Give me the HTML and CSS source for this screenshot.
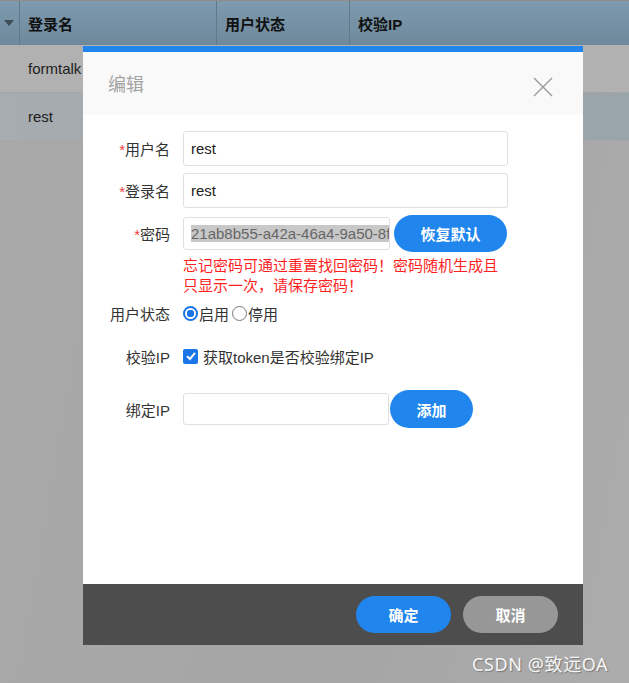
FILE: index.html
```html
<!DOCTYPE html>
<html lang="zh-CN">
<head>
    <meta charset="utf-8">
    <title>编辑</title>
    <link rel="stylesheet" href="styles.css">
</head>
<body>
    <div class="tabel">
        <div class="hoved">
            <div class="kol pil"><span class="trekant"></span></div>
            <div class="kol navn">登录名</div>
            <div class="kol status">用户状态</div>
            <div class="kol ip">校验IP</div>
        </div>
        <div class="raekke">formtalk</div>
        <div class="raekke valgt">rest</div>
    </div>

    <div class="dialog">
        <div class="top">
            <span class="titel">编辑</span>
            <svg class="luk" width="20" height="20" viewBox="0 0 20 20">
                <path d="M1 1 L19 19 M19 1 L1 19" stroke="#9a9a9a" stroke-width="1.4" fill="none"/>
            </svg>
        </div>
        <div class="indhold">
            <div class="felt">
                <label><i>*</i>用户名</label>
                <div class="input">rest</div>
            </div>
            <div class="felt">
                <label><i>*</i>登录名</label>
                <div class="input">rest</div>
            </div>
            <div class="felt kode">
                <label><i>*</i>密码</label>
                <div class="input kort"><span class="markeret">21ab8b55-a42a-46a4-9a50-8f1</span></div>
                <button class="knap">恢复默认</button>
            </div>
            <p class="fejl">忘记密码可通过重置找回密码！密码随机生成且只显示一次，请保存密码！</p>
            <div class="felt lav">
                <label>用户状态</label>
                <span class="radio on"></span>启用
                <span class="radio nr2"></span>停用
            </div>
            <div class="felt lav sidst">
                <label>校验IP</label>
                <span class="check">
                    <svg width="14" height="14" viewBox="0 0 14 14"><path d="M3 7.2 L6 10 L11 3.8" stroke="#fff" stroke-width="2" fill="none"/></svg>
                </span>
                获取token是否校验绑定IP
            </div>
            <div class="felt bind">
                <label>绑定IP</label>
                <div class="input kort2"></div>
                <button class="knap lille">添加</button>
            </div>
        </div>
        <div class="bund">
            <button class="knap ok">确定</button>
            <button class="knap annuller">取消</button>
        </div>
    </div>

    <div class="maerke">CSDN @致远OA</div>
</body>
</html>
```

FILE: styles.css
```css
body {
    margin: 0;
    height: 683px;
    overflow: hidden;
    font-family: "Liberation Sans", "Noto Sans CJK SC", sans-serif;
    background: linear-gradient(100deg, #a9a9a9, #a5a5a5 60%, #acacac);
    position: relative;
}

.tabel {
    border-top: 1px solid #8c8c8c;
}

.hoved {
    display: flex;
    height: 44px;
    background: linear-gradient(#7d9aae, #6f899c);
    font-weight: bold;
    font-size: 15px;
    color: #111;
}

.kol {
    box-sizing: border-box;
    display: flex;
    align-items: center;
    padding-left: 8px;
    border-right: 1px solid #62798a;
}

.pil {
    width: 20px;
    padding-left: 4px;
}

.trekant {
    border-left: 5px solid transparent;
    border-right: 5px solid transparent;
    border-top: 6px solid #3e4d57;
}

.navn {
    width: 197px;
}

.status {
    width: 133px;
}

.ip {
    border: none;
}

.raekke {
    height: 47px;
    line-height: 47px;
    padding-left: 28px;
    font-size: 15px;
    color: #1d1d1d;
    background-color: #b1b1b1;
    border-bottom: 1px solid #a6a6a6;
}

.raekke.valgt {
    background: linear-gradient(90deg, #a7acb0, #9aa4ab);
}

.dialog {
    position: absolute;
    left: 83px;
    top: 46px;
    box-sizing: border-box;
    width: 500px;
    height: 599px;
    background: white;
    border-top: 6px solid #2086ee;
    display: flex;
    flex-direction: column;
}

.top {
    height: 63px;
    background-color: #f9f9f9;
    display: flex;
    align-items: center;
    justify-content: space-between;
    padding: 0 30px 0 25px;
}

.titel {
    font-size: 18px;
    color: #a3a3a3;
    margin-top: -2px;
}

.luk {
    margin-top: 6px;
}

.indhold {
    flex: 1;
    padding-top: 16px;
}

.felt {
    display: flex;
    align-items: center;
    margin-bottom: 7px;
    font-size: 15px;
    color: #333;
}

.felt label {
    width: 87px;
    text-align: right;
    margin-right: 13px;
}

.felt label i {
    font-style: normal;
    color: #f04040;
}

.input {
    box-sizing: border-box;
    width: 325px;
    height: 35px;
    border: 1px solid #dcdfe6;
    border-radius: 3px;
    padding-left: 7px;
    font-size: 15px;
    line-height: 33px;
    color: #222;
    overflow: hidden;
    white-space: nowrap;
}

.felt.kode {
    margin-bottom: 0;
}

.input.kort {
    width: 207px;
    height: 33px;
    line-height: 31px;
    color: #666;
    margin-right: 4px;
}

.markeret {
    background-color: #c8c8c8;
}

.knap {
    border: none;
    border-radius: 20px;
    background-color: #2086ee;
    color: white;
    font-family: inherit;
    font-size: 15px;
    font-weight: bold;
    height: 37px;
    width: 113px;
}

.fejl {
    margin: 4px 0 6px 100px;
    width: 320px;
    font-size: 15px;
    line-height: 20px;
    color: #ff1f1f;
}

.felt.lav {
    height: 22px;
    margin-bottom: 21px;
}

.felt.lav.sidst {
    margin-bottom: 23px;
}

.radio {
    box-sizing: border-box;
    width: 15px;
    height: 15px;
    border: 1px solid #777;
    border-radius: 50%;
    margin-right: 1px;
}

.radio.on {
    border: 2px solid #1a75e6;
    background: radial-gradient(#1a75e6 3.5px, white 4px);
}

.radio.nr2 {
    margin-left: 3px;
}

.check {
    width: 15px;
    height: 15px;
    border-radius: 2px;
    background-color: #1a75e6;
    display: flex;
    align-items: center;
    justify-content: center;
    margin-right: 5px;
}

.input.kort2 {
    width: 206px;
    height: 32px;
    margin-right: 1px;
}

.knap.lille {
    width: 83px;
    height: 38px;
}

.bund {
    height: 61px;
    background-color: #4d4d4d;
    display: flex;
    align-items: center;
    justify-content: flex-end;
    padding-right: 25px;
    gap: 12px;
}

.bund .knap {
    width: 95px;
    height: 37px;
}

.knap.annuller {
    background-color: #979797;
}

.maerke {
    position: absolute;
    left: 472px;
    top: 650px;
    font-family: "Noto Sans", "Noto Sans CJK SC", sans-serif;
    font-size: 18px;
    letter-spacing: 0.6px;
    color: #f5f5f5;
    text-shadow: 1px 1px 1px #777;
}
```
